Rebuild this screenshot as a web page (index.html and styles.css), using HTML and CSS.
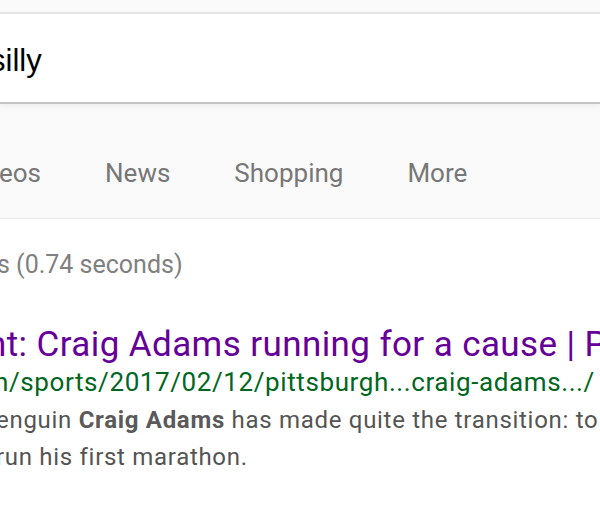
FILE: index.html
```html
<!DOCTYPE html>
<html lang="en">
  <head>
    <meta charset="UTF-8" />
    <title>silly - Search</title>
    <link rel="stylesheet" href="styles.css">
  </head>
  <body>
    <header class="header">
      <div class="searchBox">
        <span class="query">silly</span>
      </div>
      <nav class="tabs">
        <a class="tab" href="#">eos</a>
        <a class="tab" href="#">News</a>
        <a class="tab" href="#">Shopping</a>
        <a class="tab" href="#">More</a>
      </nav>
    </header>

    <main class="results">
      <div class="stats">s (0.74 seconds)</div>

      <div class="result">
        <a class="title" href="#">nt: Craig Adams running for a cause | P</a>
        <div class="url">n/sports/2017/02/12/pittsburgh...craig-adams.../</div>
        <div class="snippet">
          enguin <b>Craig Adams</b> has made quite the transition: to<br />
          run his first marathon.
        </div>
      </div>
    </main>
  </body>
</html>
```

FILE: styles.css
```css
body {
  margin: 0;
  background: #fff;
  font-family: Roboto, Arial, sans-serif;
  overflow: hidden;
}

.header {
  background: #fafafa;
  padding-top: 12px;
  border-bottom: 1px solid #ebebeb;
}

.searchBox {
  background: #fff;
  border-top: 2px solid #e4e4e4;
  height: 88px;
  display: flex;
  align-items: center;
  box-shadow: 0 2px 0 #c4c4c4, 0 4px 6px rgba(0, 0, 0, 0.06);
  position: relative;
}

.query {
  font-family: "Liberation Sans", Arial, sans-serif;
  font-size: 31px;
  color: #000;
  margin-left: -10px;
  margin-top: 6px;
}

.tabs {
  box-sizing: border-box;
  display: flex;
  gap: 64px;
  height: 116px;
  align-items: center;
  padding-top: 26px;
}

.tab {
  font-size: 26px;
  color: #777;
  text-decoration: none;
}

.tab:first-child {
  margin-left: -1px;
}

.results {
  padding-top: 31px;
}

.stats {
  font-size: 25px;
  line-height: 30px;
  color: #808080;
  margin-left: -3px;
}

.result {
  margin-top: 46px;
}

.title {
  display: block;
  font-size: 35px;
  letter-spacing: 0.4px;
  line-height: 38px;
  color: #660099;
  text-decoration: none;
  white-space: nowrap;
  margin-left: -13px;
}

.url {
  margin-top: 2px;
  font-size: 26px;
  letter-spacing: 0.6px;
  line-height: 32px;
  color: #006621;
  white-space: nowrap;
  margin-left: -6px;
}

.snippet {
  margin-top: 4px;
  font-size: 24px;
  letter-spacing: 0.7px;
  line-height: 37px;
  color: #545454;
  white-space: nowrap;
  margin-left: -4px;
}

.snippet b {
  color: #5a5a5a;
}
```
